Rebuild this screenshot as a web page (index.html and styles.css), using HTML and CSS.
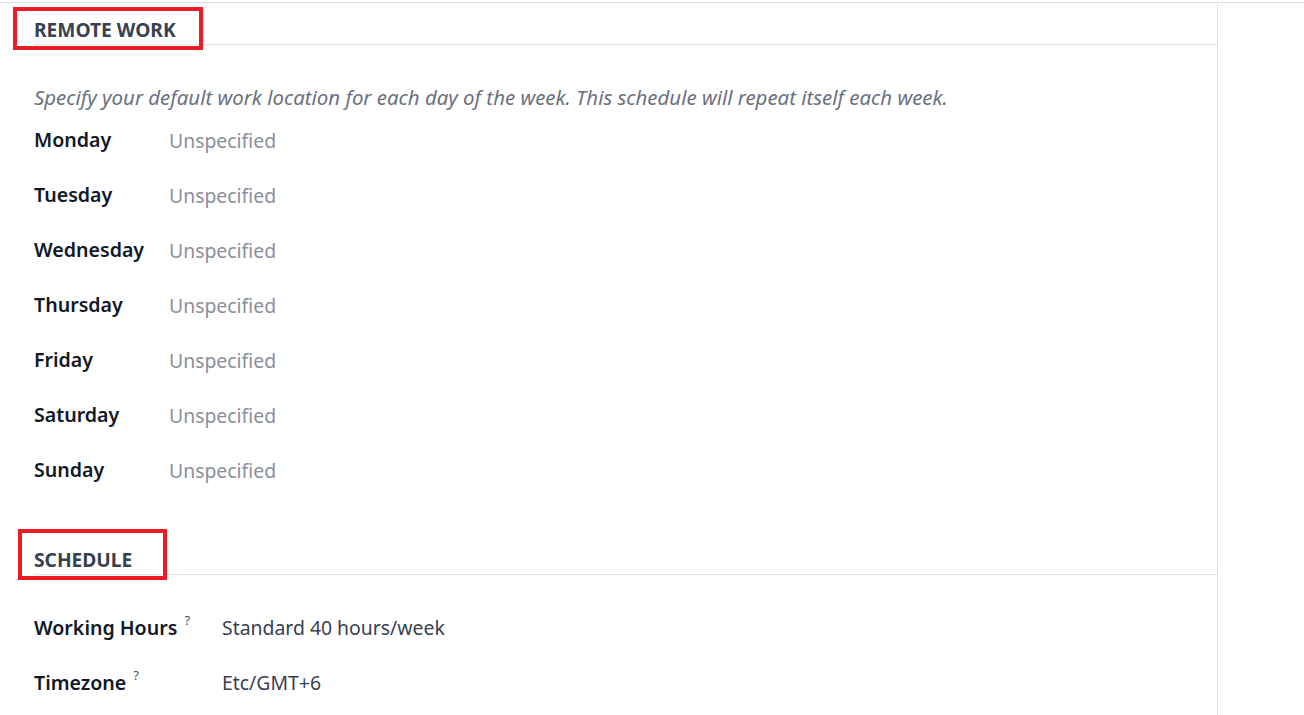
FILE: index.html
```html
<!DOCTYPE html>
<html>
<head>
<meta charset="utf-8">
<link rel="stylesheet" href="styles.css">
</head>
<body>
<div class="page">
  <main class="sheet">
    <section class="group">
      <div class="group-head">
        <h2 class="group-title">REMOTE WORK</h2>
        <span class="mark mark-remote"></span>
      </div>
      <p class="hint">Specify your default work location for each day of the week. This schedule will repeat itself each week.</p>
      <div class="days">
        <div class="row"><span class="label">Monday</span><span class="value muted">Unspecified</span></div>
        <div class="row"><span class="label">Tuesday</span><span class="value muted">Unspecified</span></div>
        <div class="row"><span class="label">Wednesday</span><span class="value muted">Unspecified</span></div>
        <div class="row"><span class="label">Thursday</span><span class="value muted">Unspecified</span></div>
        <div class="row"><span class="label">Friday</span><span class="value muted">Unspecified</span></div>
        <div class="row"><span class="label">Saturday</span><span class="value muted">Unspecified</span></div>
        <div class="row"><span class="label">Sunday</span><span class="value muted">Unspecified</span></div>
      </div>
    </section>
    <section class="group group-schedule">
      <div class="group-head">
        <h2 class="group-title">SCHEDULE</h2>
        <span class="mark mark-schedule"></span>
      </div>
      <div class="sched">
        <div class="row"><span class="label label-wide">Working Hours<sup class="help">?</sup></span><span class="value">Standard 40 hours/week</span></div>
        <div class="row"><span class="label label-wide">Timezone<sup class="help">?</sup></span><span class="value">Etc/GMT+6</span></div>
      </div>
    </section>
  </main>
  <aside class="side"></aside>
</div>
</body>
</html>
```
FILE: styles.css
```css
* { box-sizing: border-box; }
html, body { margin: 0; padding: 0; background: #fff; }
body {
  font-family: "Noto Sans", "Open Sans", sans-serif;
  color: #1f2433;
  height: 715px;
  overflow: hidden;
}
.page {
  display: flex;
  margin-top: 2px;
  border-top: 1px solid #dedede;
  height: 713px;
}
.sheet {
  width: 1218px;
  border-right: 1px solid #e3e3e3;
  padding-left: 34px;
}
.side { flex: 1; }
.group-head {
  position: relative;
  border-bottom: 1px solid #e2e2e2;
  height: 42px;
  display: flex;
  align-items: flex-end;
}
.group-title {
  margin: 0 0 1px 0;
  font-size: 19.2px;
  font-weight: 700;
  color: #374151;
  line-height: 26px;
}
.mark {
  position: absolute;
  border: 4px solid #ec1c24;
}
.mark-remote { left: -21px; top: 4px; width: 190px; height: 43px; }
.mark-schedule { left: -16px; top: -3px; width: 149px; height: 51px; }
.hint {
  margin: 39px 0 0 0;
  font-style: italic;
  font-size: 20.4px;
  line-height: 26px;
  color: #6b7080;
}
.days { margin-top: 17px; }
.row {
  display: flex;
  align-items: flex-start;
  height: 55px;
}
.label {
  width: 135px;
  font-size: 19.6px;
  font-weight: 600;
  color: #111827;
  line-height: 26px;
}
.days .row .value { padding-top: 1px; }
.label-wide { width: 188px; }
.value {
  font-size: 19.4px;
  line-height: 26px;
  color: #374151;
}
.muted { color: #8b8f9c; }
.help {
  font-size: 13px;
  font-weight: 400;
  color: #4b5060;
  margin-left: 7px;
  vertical-align: 10px;
  line-height: 0;
}
.group-schedule { margin-top: 20px; }
.group-schedule .group-head { height: 43px; }
.sched { padding-top: 40px; }
```
